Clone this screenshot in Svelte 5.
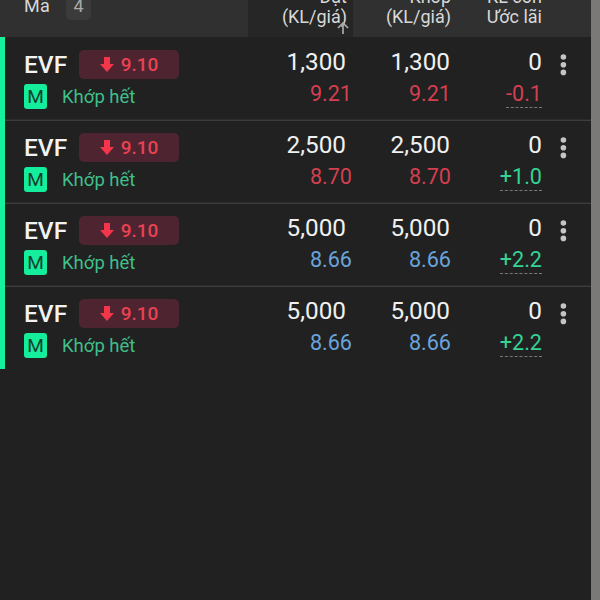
<script>
  const orders = [
    { placed: '1,300', price: '9.21', tone: 'red', profit: '-0.1', gain: 'red' },
    { placed: '2,500', price: '8.70', tone: 'red', profit: '+1.0', gain: 'green' },
    { placed: '5,000', price: '8.66', tone: 'blue', profit: '+2.2', gain: 'green' },
    { placed: '5,000', price: '8.66', tone: 'blue', profit: '+2.2', gain: 'green' },
  ];
</script>

<div class="screen">
  <main>
    <header>
      <div class="head code"><span class="label">Mã</span><span class="count">4</span></div>
      <div class="head placed">
        <span>Đặt</span><span>(KL/giá)</span>
        <svg class="sort" width="14" height="14" viewBox="0 0 14 14"><path d="M7 13V2M2 7l5-5 5 5" /></svg>
      </div>
      <div class="head matched"><span>Khớp</span><span>(KL/giá)</span></div>
      <div class="head profit"><span>KL còn</span><span>Ước lãi</span></div>
    </header>
    <section>
      {#each orders as order}
        <article>
          <div class="stock">
            <div class="top">
              <b>EVF</b>
              <span class="badge">
                <svg width="14" height="15" viewBox="0 0 14 15"><path d="M4 0h6v7h4l-7 8-7-8h4z" /></svg>
                <span>9.10</span>
              </span>
            </div>
            <div class="status"><span class="market">M</span><span>Khớp hết</span></div>
          </div>
          <div class="cell ordered"><span class="volume">{order.placed}</span><span class="price {order.tone}">{order.price}</span></div>
          <div class="cell matched"><span class="volume">{order.placed}</span><span class="price {order.tone}">{order.price}</span></div>
          <div class="cell profit"><span class="volume">0</span><span class="price dashed {order.gain}">{order.profit}</span></div>
          <svg class="more" width="8" height="24" viewBox="0 0 8 24"><circle cx="4.4" cy="4" r="2.8" /><circle cx="4.4" cy="11.7" r="2.8" /><circle cx="4.4" cy="19.4" r="2.8" /></svg>
        </article>
      {/each}
    </section>
  </main>
  <aside></aside>
</div>

<style>
  :global(body) { margin: 0; background: #212121; }
  * { box-sizing: border-box; }
  .screen { width: 600px; height: 600px; display: flex; overflow: hidden; background: #212121; font-family: Roboto, "Liberation Sans", sans-serif; }
  main { width: 591px; }
  aside { flex: 1; background: #7b7978; }
  header { height: 37px; display: grid; grid-template-columns: 248px 105px 98px 140px; background: #303030; color: #d8d8d8; font-size: 18px; line-height: 20px; overflow: hidden; }
  .head { display: flex; flex-direction: column; align-items: flex-end; height: 50px; margin-top: -13px; white-space: nowrap; }
  .head.code { flex-direction: row; align-items: flex-start; padding-left: 24px; margin-top: -4px; }
  .code .label { font-size: 18px; letter-spacing: .3px; }
  .count { width: 25px; height: 28px; margin: -4px 0 0 16px; padding-top: 4px; border-radius: 5px; background: #3b3b3b; text-align: center; color: #aaa; }
  .head.placed { position: relative; padding-right: 6px; background: #262626; }
  .head.profit { padding-right: 49px; }
  .sort { position: absolute; left: 88px; top: 34px; fill: none; stroke: #aaa; stroke-width: 1.7; }
  section { border-left: 5px solid #16f1a0; }
  article { height: 83px; display: grid; grid-template-columns: 243px 105px 98px 91px 49px; border-top: 1px solid #3d3d3d; box-shadow: 0 -1px #2c2c2c; }
  article:first-child { border-top-color: transparent; box-shadow: none; }
  .stock { padding: 12px 0 0 19px; }
  .top { height: 29px; display: flex; align-items: center; }
  b { width: 55px; font-size: 24.5px; font-weight: 500; line-height: 28px; color: #f2f2f2; transform: translateY(-.5px); }
  .badge { width: 100px; height: 29px; display: flex; align-items: center; justify-content: center; gap: 7px; border-radius: 5px; background: #4e2430; color: #e84253; font-size: 19px; font-weight: 500; line-height: 29px; }
  .badge svg { fill: #f5364a; }
  .status { display: flex; align-items: center; height: 25px; margin-top: 5px; color: #3fbf8a; font-size: 18.5px; }
  .market { width: 23px; height: 25px; margin-right: 15px; border-radius: 3px; background: #13ed9c; color: #123f30; text-align: center; font-size: 19px; font-weight: 400; line-height: 25px; }
  .cell { display: flex; flex-direction: column; align-items: flex-end; padding-top: 9px; }
  .volume { font-size: 24.3px; line-height: 30px; color: #f0f0f0; }
  .price { margin-top: 2px; font-size: 21.6px; line-height: 30px; }
  .ordered .volume { margin-right: 7px; }
  .ordered .price { margin-right: 1px; }
  .matched .volume { margin-right: 1px; }
  .red { color: #d43f50; }
  .blue { color: #6aa4dc; }
  .green { color: #35d394; }
  .dashed { height: 29px; border-bottom: 1px dashed #777; }
  .more { margin: 15px 0 0 17px; fill: #c5c5c5; }
</style>
